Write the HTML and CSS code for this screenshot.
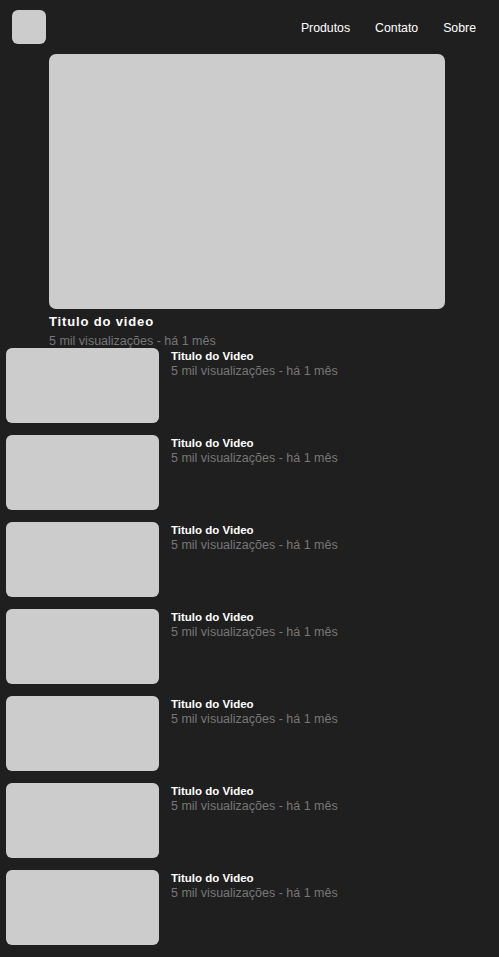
FILE: index.html
```html
<!DOCTYPE html>
<html lang="pt">
<head>
<meta charset="utf-8">
<title>Videos</title>
<link rel="stylesheet" href="styles.css">
</head>
<body>
<header class="header">
  <div class="logo"></div>
  <nav class="nav">
    <a href="#">Produtos</a>
    <a href="#">Contato</a>
    <a href="#">Sobre</a>
  </nav>
</header>
<main>
  <section class="featured">
    <div class="featured-thumb"></div>
    <h1 class="featured-title">Titulo do video</h1>
    <p class="meta">5 mil visualizações - há 1 mês</p>
  </section>
  <ul class="list">
    <li class="item"><div class="thumb"></div><div class="info"><h2 class="item-title">Titulo do Video</h2><p class="meta">5 mil visualizações - há 1 mês</p></div></li>
    <li class="item"><div class="thumb"></div><div class="info"><h2 class="item-title">Titulo do Video</h2><p class="meta">5 mil visualizações - há 1 mês</p></div></li>
    <li class="item"><div class="thumb"></div><div class="info"><h2 class="item-title">Titulo do Video</h2><p class="meta">5 mil visualizações - há 1 mês</p></div></li>
    <li class="item"><div class="thumb"></div><div class="info"><h2 class="item-title">Titulo do Video</h2><p class="meta">5 mil visualizações - há 1 mês</p></div></li>
    <li class="item"><div class="thumb"></div><div class="info"><h2 class="item-title">Titulo do Video</h2><p class="meta">5 mil visualizações - há 1 mês</p></div></li>
    <li class="item"><div class="thumb"></div><div class="info"><h2 class="item-title">Titulo do Video</h2><p class="meta">5 mil visualizações - há 1 mês</p></div></li>
    <li class="item"><div class="thumb"></div><div class="info"><h2 class="item-title">Titulo do Video</h2><p class="meta">5 mil visualizações - há 1 mês</p></div></li>
  </ul>
</main>
</body>
</html>
```
FILE: styles.css
```css
html, body {
  margin: 0;
  padding: 0;
  background: #1f1f1f;
  font-family: "Liberation Sans", Arial, sans-serif;
  color: #fff;
}
.header {
  display: flex;
  align-items: center;
  justify-content: space-between;
  padding: 10px 23px 0 12px;
  height: 34px;
}
.logo {
  width: 34px;
  height: 34px;
  border-radius: 6px;
  background: #cccccc;
}
.nav {
  display: flex;
  gap: 25px;
  padding-top: 2px;
}
.nav a {
  color: #fff;
  text-decoration: none;
  font-size: 12.3px;
}
.featured {
  margin: 10px 0 0 49px;
  width: 396px;
}
.featured-thumb {
  height: 255px;
  border-radius: 7px;
  background: #cccccc;
}
.featured-title {
  margin: 5px 0 0;
  font-size: 13px;
  font-weight: bold;
  letter-spacing: 0.85px;
  line-height: 15px;
}
.meta {
  margin: 0;
  font-size: 12.5px;
  line-height: 15px;
  color: #777;
}
.featured .meta {
  margin-top: 5px;
  height: 14px;
}
.list {
  list-style: none;
  margin: 0;
  padding: 0 0 0 6px;
  display: flex;
  flex-direction: column;
  gap: 12px;
}
.item {
  display: flex;
  gap: 12px;
}
.thumb {
  width: 153px;
  height: 75px;
  border-radius: 6px;
  background: #cccccc;
  flex-shrink: 0;
}
.info {
  padding-top: 1px;
}
.item-title {
  margin: 0;
  font-size: 11.5px;
  font-weight: bold;
  line-height: 15px;
}
```
